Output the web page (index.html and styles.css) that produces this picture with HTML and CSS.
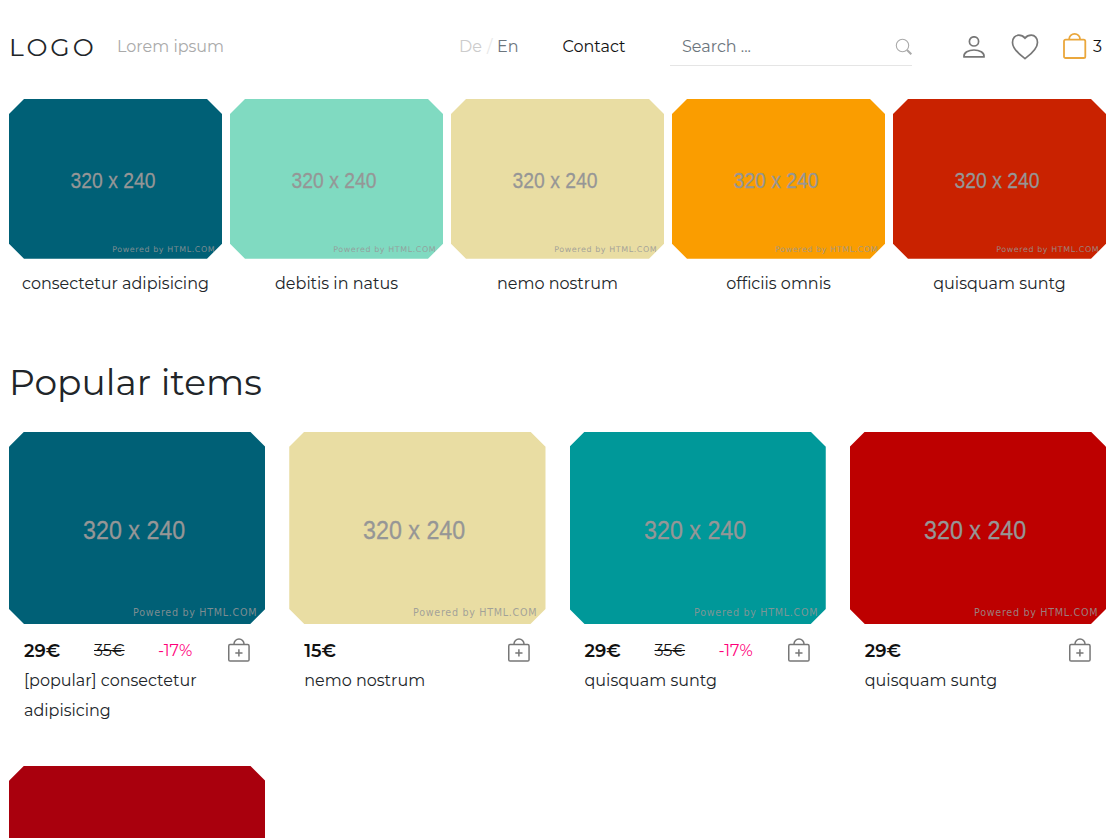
FILE: index.html
```
<!DOCTYPE html>
<html lang="en">
<head>
<meta charset="utf-8">
<title>Logo shop</title>
<link rel="stylesheet" href="styles.css">
</head>
<body>
<svg class="defs" aria-hidden="true">
  <symbol id="label" viewBox="0 0 320 240">
    <text class="size" x="92.500" y="134" textLength="127.500" lengthAdjust="spacingAndGlyphs">320 x 240</text>
    <text class="credit" x="155" y="230" textLength="154">Powered by HTML.COM</text>
  </symbol>
  <symbol id="bag" viewBox="0 0 24 26">
    <rect x="1" y="6.7" width="21.3" height="18.3" rx="1.6"/>
    <path d="M6.2 6.5V5.900a5.4 5 0 0 1 10.8 0v.6"/>
  </symbol>
  <symbol id="bag-plus" viewBox="0 0 22 24">
    <rect x=".75" y="6.6" width="20.3" height="16.4" rx="1.3"/>
    <path d="M6 6.5V6a5 5 0 0 1 10 0v.5M10.9 11.3v7.2M7.3 14.9h7.2"/>
  </symbol>
</svg>
<header class="header">
  <a class="logo">LOGO</a>
  <span class="tagline">Lorem ipsum</span>
  <nav class="lang"><a class="de">De</a><i class="slash">/</i><a class="en">En</a></nav>
  <a class="contact">Contact</a>
  <div class="search"><span class="hint">Search ...</span>
    <svg width="17" height="17" viewBox="0 0 17 17"><circle cx="7.5" cy="7.5" r="6.2"/><path class="handle" d="M12 12l4.300 4.300"/></svg>
  </div>
  <svg class="user" width="22" height="22" viewBox="0 0 22 22"><circle cx="11" cy="5.4" r="4.6"/><path d="M1 20.8c-.5-4.400 4.600-6.800 10-6.800s10.500 2.400 10 6.800z"/></svg>
  <svg class="heart" width="28" height="26" viewBox="0 0 28 26"><path d="M14 24.600C9.500 21.200 1.500 15.500 1.500 8.400 1.500 4 4.300 1.200 7.700 1.200c2.900 0 4.700 1 6.300 2.900 1.600-1.900 3.400-2.900 6.300-2.900 3.400 0 6.200 2.800 6.200 7.200 0 7.100-8 12.800-12.500 16.200z"/></svg>
  <a class="cart"><svg width="24" height="26"><use href="#bag"/></svg><span>3</span></a>
</header>
<main class="main">
  <section class="categories">
    <a class="category"><svg class="picture teal"><use href="#label"/></svg><span>consectetur adipisicing</span></a>
    <a class="category"><svg class="picture mint"><use href="#label"/></svg><span>debitis in natus</span></a>
    <a class="category"><svg class="picture sand"><use href="#label"/></svg><span>nemo nostrum</span></a>
    <a class="category"><svg class="picture orange"><use href="#label"/></svg><span>officiis omnis</span></a>
    <a class="category"><svg class="picture rust"><use href="#label"/></svg><span>quisquam suntg</span></a>
  </section>
  <h2 class="title">Popular items</h2>
  <section class="products">
    <article class="product"><svg class="picture teal"><use href="#label"/></svg>
      <div class="prices"><b>29€</b><s>35€</s><em>-17%</em><svg class="add"><use href="#bag-plus"/></svg></div>
      <p>[popular] consectetur adipisicing</p></article>
    <article class="product"><svg class="picture sand"><use href="#label"/></svg>
      <div class="prices"><b>15€</b><svg class="add"><use href="#bag-plus"/></svg></div>
      <p>nemo nostrum</p></article>
    <article class="product"><svg class="picture cyan"><use href="#label"/></svg>
      <div class="prices"><b>29€</b><s>35€</s><em>-17%</em><svg class="add"><use href="#bag-plus"/></svg></div>
      <p>quisquam suntg</p></article>
    <article class="product"><svg class="picture red"><use href="#label"/></svg>
      <div class="prices"><b>29€</b><svg class="add"><use href="#bag-plus"/></svg></div>
      <p>quisquam suntg</p></article>
    <article class="product"><svg class="picture crimson"></svg></article>
  </section>
</main>
</body>
</html>
```
FILE: styles.css
```
* { box-sizing: border-box; }
body {
  margin: 0;
  height: 838px;
  overflow: hidden;
  background: #fff;
  color: #212529;
  font: 400 16px/30px Montserrat, Inter, sans-serif;
}
svg { display: block; flex: none; fill: none; stroke: #777; stroke-width: 1.5; }
.defs { position: absolute; width: 0; height: 0; }
.header { display: flex; align-items: center; height: 99px; padding: 0 0 5px 9px; }
.logo { width: 108px; font-size: 25px; letter-spacing: 3px; color: #212529; }
.tagline { width: 342px; color: #aaa; }
.lang { display: flex; width: 103.5px; }
.de { width: 28px; color: #ccc; }
.slash { width: 10px; font-style: normal; color: #e8e8e8; }
.en { color: #6c757d; }
.contact { width: 107.5px; color: #111; }
.search {
  display: flex;
  align-items: center;
  justify-content: space-between;
  width: 242px;
  height: 38px;
  padding-left: 12px;
  border-bottom: 1px solid #e5e5e5;
}
.hint { color: #6c757d; }
.search svg { stroke: #aaa; stroke-width: 1.1; }
.search .handle { stroke-width: 2; }
.user { margin-left: 51px; }
.heart { margin-left: 26px; }
.cart { display: flex; align-items: center; gap: 6px; margin-left: 24px; color: #111; }
.cart svg { margin-bottom: 2px; stroke: #eaa73c; stroke-width: 1.8; }
.user, .heart { stroke-width: 1.7; }
.main { padding: 0 11px 0 9px; }
.categories { display: grid; grid-template-columns: repeat(5, 1fr); gap: 8px; }
.category { text-align: center; }
.category span { display: block; padding-top: 10px; }
.picture {
  width: 100%;
  aspect-ratio: 4 / 3;
  stroke: none;
  clip-path: polygon(15px 0, calc(100% - 15px) 0, 100% 15px, 100% calc(100% - 15px), calc(100% - 15px) 100%, 15px 100%, 0 calc(100% - 15px), 0 15px);
}
.size { fill: #969696; stroke: #969696; stroke-width: .4; font: 33px "Liberation Sans", sans-serif; }
.credit { fill: #969696; fill-opacity: .85; font: 12px "DejaVu Sans", sans-serif; }
.teal { background: #006076; }
.mint { background: #80dac1; }
.sand { background: #e9dda3; }
.orange { background: #fa9d00; }
.rust { background: #c92200; }
.cyan { background: #009899; }
.red { background: #bd0000; }
.crimson { background: #a9000d; }
.title { margin: 61px 0 28px; font-size: 36px; line-height: 44px; font-weight: 400; letter-spacing: .05px; color: #212529; }
.products { display: grid; grid-template-columns: repeat(4, 1fr); grid-auto-rows: 294px; gap: 40px 24px; }
.prices { display: flex; height: 26px; margin: 14px 15.5px 0 15px; line-height: 26px; }
.prices b { width: 70px; font-size: 18px; font-weight: 600; color: #111; }
.prices s { width: 64px; color: #111; }
.prices em { font-style: normal; color: #ff007a; }
.add { width: 22px; height: 24px; margin-left: auto; }
.product p { margin: 0 15px; padding-top: 2px; }
```
